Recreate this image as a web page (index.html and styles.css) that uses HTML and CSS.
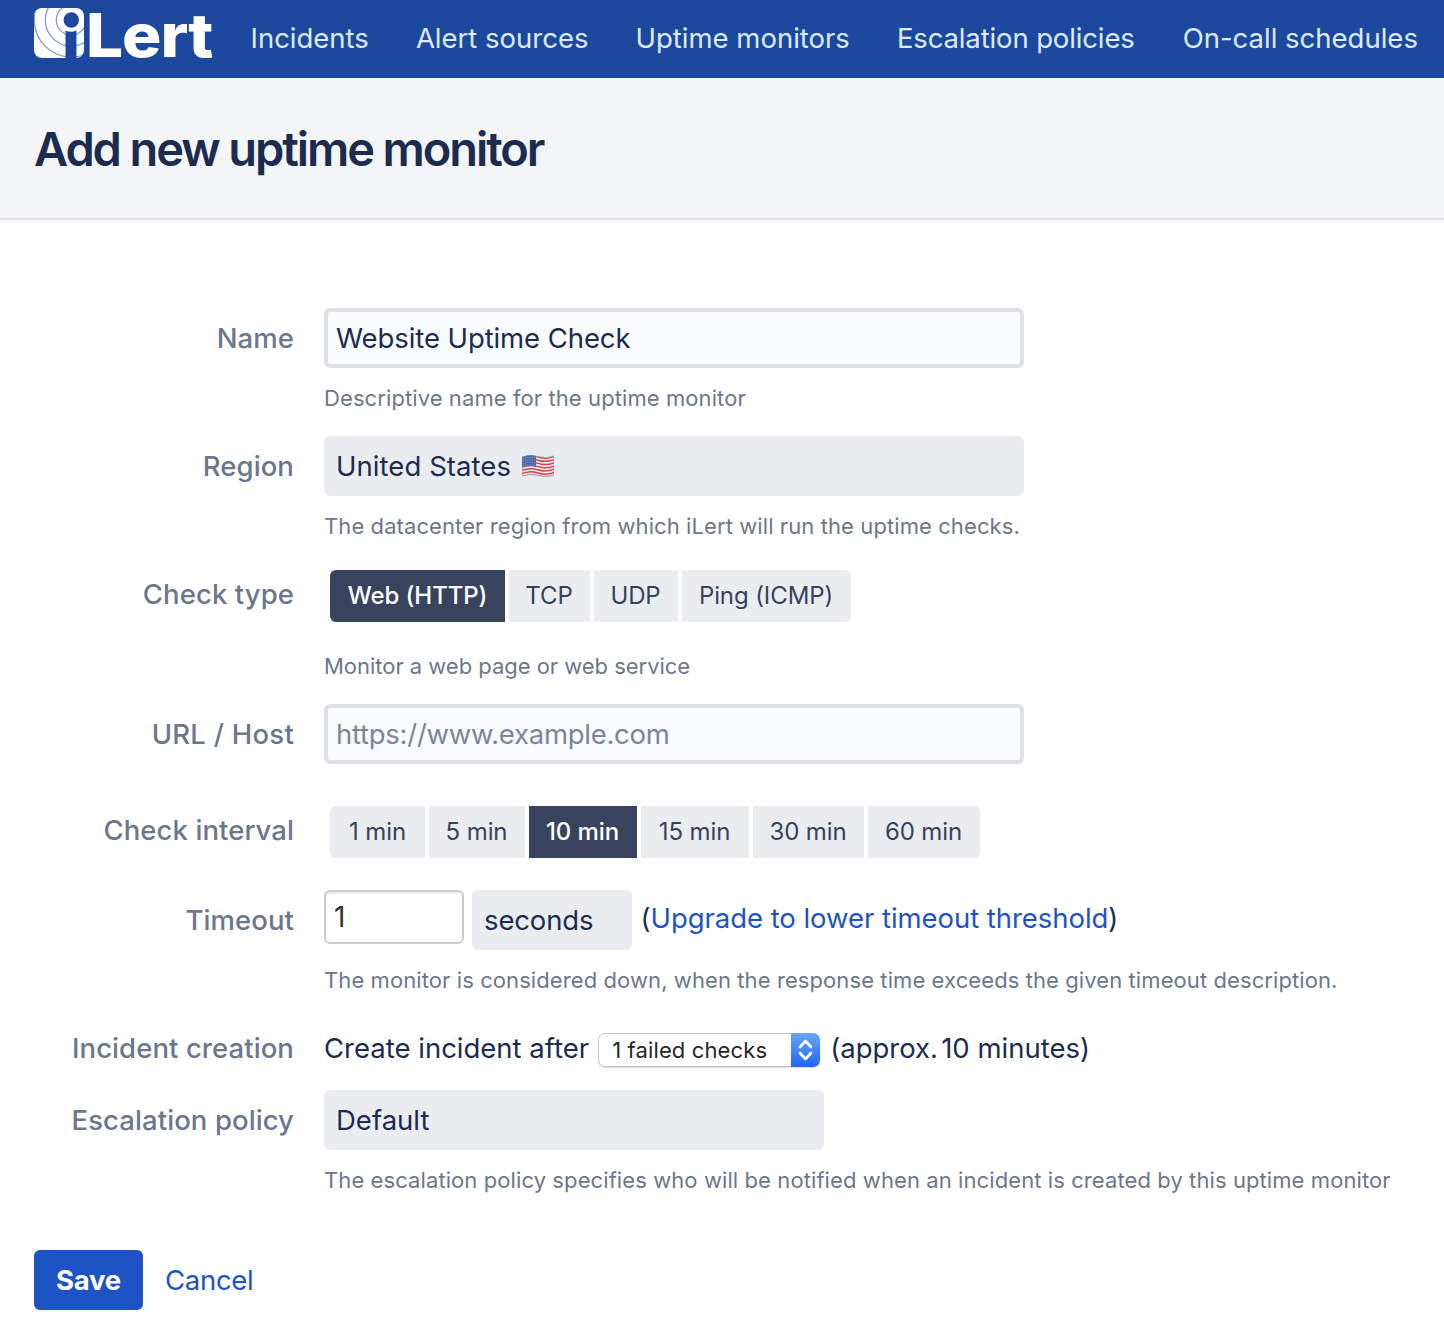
FILE: index.html
```html
<!DOCTYPE html>
<html lang="en">
<head>
<meta charset="utf-8">
<title>Add new uptime monitor</title>
<link rel="stylesheet" href="styles.css">
</head>
<body>
<header class="topbar">
  <a class="logo" aria-label="iLert">
    <svg class="logo-mark" viewBox="0 0 50 50" width="50" height="50">
      <clipPath id="mark"><rect width="50" height="50" rx="8"/></clipPath>
      <g clip-path="url(#mark)">
        <rect width="50" height="50" fill="#fff"/>
        <g fill="none" stroke="#7f9bd0" stroke-width="1.3">
          <circle cx="37.300" cy="12" r="15"/>
          <circle cx="37.300" cy="12" r="26"/>
          <circle cx="37.300" cy="12" r="37"/>
        </g>
        <circle cx="37.300" cy="12" r="7.700" fill="#1c499e"/>
        <path d="M31.500 50V22.500q5.500 2.500 11 0V50z" fill="#1c499e"/>
      </g>
    </svg>
    <span class="logo-text">Lert</span>
  </a>
  <nav class="nav">
    <a>Incidents</a>
    <a>Alert sources</a>
    <a>Uptime monitors</a>
    <a class="policies">Escalation policies</a>
    <a>On-call schedules</a>
  </nav>
</header>
<section class="page-head"><h1>Add new uptime monitor</h1></section>
<main class="form">
  <div class="row">
    <label class="label">Name</label>
    <div class="field">
      <div class="box outlined name">Website Uptime Check</div>
      <p class="hint">Descriptive name for the uptime monitor</p>
    </div>
  </div>
  <div class="row">
    <label class="label">Region</label>
    <div class="field">
      <div class="box filled region">United States
        <svg class="flag" viewBox="0 0 32 24" width="32" height="24">
          <clipPath id="wave"><path d="M0 3Q8 0 16 2.500T32 2V21Q24 24 16 21.500T0 22Z"/></clipPath>
          <g clip-path="url(#wave)">
            <rect width="32" height="24" fill="#f2eef0"/>
            <path d="M0 3.500Q8 .5 16 3T32 2.500M0 6.700Q8 3.700 16 6.200T32 5.700M0 9.900Q8 6.900 16 9.400T32 8.900M0 13.100Q8 10.100 16 12.600T32 12.100M0 16.300Q8 13.300 16 15.800T32 15.300M0 19.500Q8 16.500 16 19T32 18.500M0 22.500Q8 19.500 16 22T32 21.500" fill="none" stroke="#cf4450" stroke-width="1.500"/>
            <path d="M0 0H14V13Q7 11 0 13.500Z" fill="#466aa8"/>
            <path d="M1 4.500Q7 2.500 13 4M1 7Q7 5 13 6.500M1 9.500Q7 7.500 13 9M1 12Q7 10 13 11.500" fill="none" stroke="#a6bcdc" stroke-width=".8" stroke-dasharray="1 1.200"/>
          </g>
          <path d="M0 3Q8 0 16 2.500T32 2V21Q24 24 16 21.500T0 22Z" fill="none" stroke="#8f8790" stroke-width=".6"/>
        </svg>
      </div>
      <p class="hint">The datacenter region from which iLert will run the uptime checks.</p>
    </div>
  </div>
  <div class="row">
    <label class="label">Check type</label>
    <div class="field">
      <div class="segments types">
        <button class="seg active web">Web (HTTP)</button>
        <button class="seg tcp">TCP</button>
        <button class="seg udp">UDP</button>
        <button class="seg ping">Ping (ICMP)</button>
      </div>
      <p class="hint type-hint">Monitor a web page or web service</p>
    </div>
  </div>
  <div class="row">
    <label class="label url-label">URL / Host</label>
    <div class="field"><div class="box outlined placeholder">https://www.example.com</div></div>
  </div>
  <div class="row interval-row">
    <label class="label">Check interval</label>
    <div class="field">
      <div class="segments">
        <button class="seg min-1">1 min</button>
        <button class="seg min-5">5 min</button>
        <button class="seg active min-10">10 min</button>
        <button class="seg min-10">15 min</button>
        <button class="seg min-30">30 min</button>
        <button class="seg min-60">60 min</button>
      </div>
    </div>
  </div>
  <div class="row">
    <label class="label">Timeout</label>
    <div class="field">
      <div class="inline">
        <div class="number">1</div>
        <div class="box filled unit">seconds</div>
        <div class="upgrade">(<a class="link">Upgrade to lower timeout threshold</a>)</div>
      </div>
      <p class="hint">The monitor is considered down, when the response time exceeds the given timeout description.</p>
    </div>
  </div>
  <div class="row incident-row">
    <label class="label">Incident creation</label>
    <div class="field inline incident">
      <span>Create incident after</span>
      <div class="select">1 failed checks
        <i class="stepper"><svg viewBox="0 0 29 34" width="29" height="34"><path d="M9 14l5.500-6 5.500 6M9 20l5.500 6 5.500-6" fill="none" stroke="#fff" stroke-width="2.600" stroke-linecap="round" stroke-linejoin="round"/></svg></i>
      </div>
      <span>(approx.<span class="tight"> </span>10 minutes)</span>
    </div>
  </div>
  <div class="row">
    <label class="label">Escalation policy</label>
    <div class="field">
      <div class="box filled policy">Default</div>
      <p class="hint">The escalation policy specifies who will be notified when an incident is created by this uptime monitor</p>
    </div>
  </div>
</main>
<footer class="actions">
  <button class="save">Save</button>
  <a class="link cancel">Cancel</a>
</footer>
</body>
</html>
```
FILE: styles.css
```css
* { box-sizing: border-box; }
body { margin: 0; background: #fff; color: #1b2c50; font: 400 27.5px/61px Inter, "Liberation Sans", sans-serif; white-space: nowrap; }
button { border: 0; font: inherit; color: inherit; letter-spacing: inherit; }
p, h1 { margin: 0; }
.topbar { height: 78px; background: #1c499e; color: #deebff; display: flex; padding-left: 34px; }
.logo { display: flex; width: 216.5px; height: 50px; margin-top: 8px; }
.logo-text { color: #fff; font-size: 60px; font-weight: 800; line-height: 54px; letter-spacing: -1px; margin-left: 2px; transform: scaleX(1.095); transform-origin: left; }
.nav { display: flex; gap: 47px; line-height: 77px; }
.policies { letter-spacing: -.13px; margin-right: 1px; }
.page-head { height: 142px; background: #f4f5f7; border-bottom: 2px solid #dfe1e6; padding: 0 34px; }
.page-head h1 { font-size: 47px; font-weight: 600; line-height: 142px; letter-spacing: -2.1px; }
.form { padding: 88px 0 0 34px; display: flex; flex-direction: column; gap: 8px; }
.row { display: flex; gap: 30px; }
.label { width: 260px; height: 60px; text-align: right; font-weight: 500; color: #6b778c; letter-spacing: .08px; }
.url-label { letter-spacing: .25px; }
.field { flex: 1; }
.box { width: 700px; height: 60px; border-radius: 6px; padding: 1px 0 0 12px; display: flex; align-items: center; }
.outlined { border: 4px solid #dfe1e6; background: #fafbfc; padding-left: 8px; }
.filled { background: #ebecf0; }
.name { letter-spacing: -.09px; }
.region { letter-spacing: .06px; }
.placeholder { color: #7a869a; letter-spacing: -.27px; }
.flag { margin: -1px 0 0 11px; }
.hint { font-size: 22px; line-height: 60px; color: #6b778c; letter-spacing: .09px; }
.type-hint { letter-spacing: -.03px; }
.segments { display: flex; gap: 4px; padding: 6px 0 0 6px; font-size: 24px; line-height: 52px; color: #36425d; letter-spacing: -.1px; }
.types { height: 72px; }
.seg { height: 52px; padding: 0 1px 0 0; background: #ebecf0; text-align: center; }
.seg:first-child { border-radius: 6px 0 0 6px; padding: 0; }
.seg:last-child { border-radius: 0 6px 6px 0; }
.seg.active { background: #38445e; color: #fff; font-weight: 500; }
.web { width: 175px; }
.tcp { width: 81px; }
.udp { width: 84px; }
.ping { width: 169px; }
.min-1 { width: 95px; }
.min-5 { width: 96px; }
.min-10 { width: 108px; }
.min-30 { width: 111px; }
.min-60 { width: 112px; }
.interval-row { margin-top: 28px; height: 60px; }
.interval-row + .row { margin-top: 22px; }
.inline { display: flex; align-items: flex-start; height: 60px; }
.number { width: 140px; height: 54px; border: 2px solid #ccc; border-radius: 6px; box-shadow: inset 0 2px 2px rgba(0,0,0,.075); padding-left: 8px; line-height: 51px; font-size: 28px; color: #333; }
.unit { width: 160px; margin: 0 8.5px 0 8px; letter-spacing: -.14px; }
.upgrade { line-height: 57px; letter-spacing: -.05px; }
.link { color: #1d53c5; }
.select { display: flex; width: 222px; height: 34px; margin: 15px 10px 0 9px; border: 1px solid #c5c5c5; border-radius: 7px; box-shadow: 0 1px 1px rgba(0,0,0,.15); padding-left: 13px; line-height: 33px; font-size: 22px; letter-spacing: .13px; color: #262626; }
.stepper { width: 29px; height: 34px; margin: -1px -1px 0 auto; border-radius: 0 7px 7px 0; background: linear-gradient(#6aa7f8, #2065f5); }
.stepper svg { display: block; }
.tight { letter-spacing: -4.6px; }
.incident-row { height: 64px; }
.policy { width: 500px; }
.actions { display: flex; padding: 40px 34px 19px; gap: 22px; letter-spacing: -.28px; }
.save { width: 109px; height: 60px; padding: 0; border-radius: 6px; background: #1d53c5; color: #fff; font-weight: 700; }
```
